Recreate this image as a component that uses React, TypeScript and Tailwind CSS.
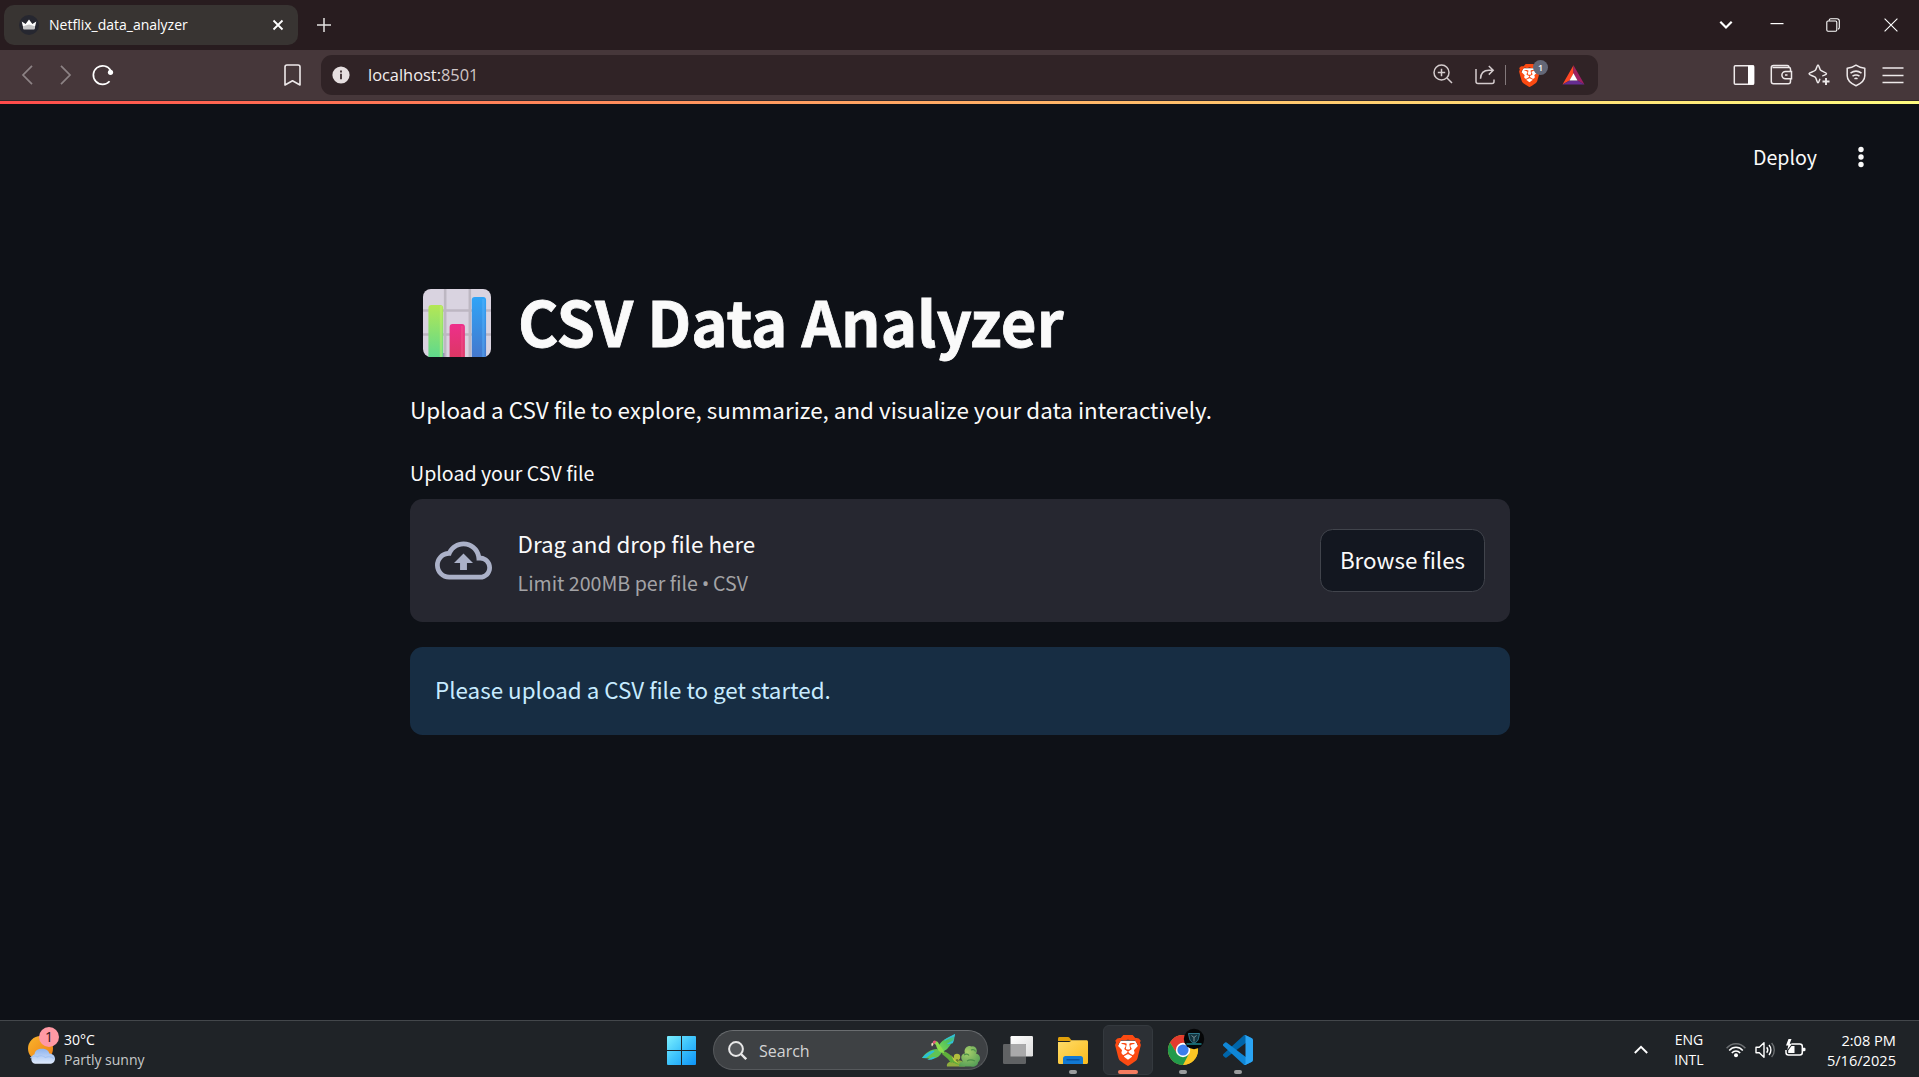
import type { ReactNode } from 'react';
import { SiBrave } from 'react-icons/si';

function BraveLogo({ className }: { className: string }) {
  return (
    <span className={`relative block ${className}`}>
      <svg viewBox="1.7 0 20.6 24" preserveAspectRatio="none" className="absolute inset-0 h-full w-full">
        <path d="M6 4.5h12l2.2 4.5-2 7.5L12 21.5 5.8 16.5 3.8 9z" fill="#fff" />
      </svg>
      <SiBrave viewBox="1.7 0 20.6 24" preserveAspectRatio="none" className="absolute inset-0 h-full w-full text-[#fb4a12]" />
    </span>
  );
}

function TabStrip() {
  return (
    <div className="flex h-[50px] items-center bg-[#281c1f] pl-1 text-white">
      <div className="flex h-10 w-[294px] items-center rounded-[10px] bg-[#383432] pl-[15px] pr-[14.5px]">
        <svg width="20" height="20" viewBox="0 0 20 20">
          <circle cx="10" cy="10" r="10" fill="#262730" />
          <path d="M2.7 6.4 6.6 9 10 4.6 13.4 9l3.9-2.6-1.9 7.9H4.6z" fill="#fff" />
          <path d="M4 11.2 10 9.6l6 1.6-.7 3.1H4.6z" fill="#c4c4c6" />
        </svg>
        <span className="ml-[10px] font-['Open_Sans',sans-serif] text-[14px] leading-5">Netflix_data_analyzer</span>
        <svg className="ml-auto" width="12" height="12" viewBox="0 0 12 12" stroke="#fff" strokeWidth="1.8">
          <path d="m1.5 1.5 9 9m0-9-9 9" />
        </svg>
      </div>
      <svg className="ml-[19px]" width="14" height="14" viewBox="0 0 14 14" stroke="#e4e2e2" strokeWidth="1.5">
        <path d="M7 0v14M0 7h14" />
      </svg>
      <div className="ml-auto flex items-center pr-[21px]">
        <svg width="14" height="10" viewBox="0 0 14 10" fill="none" stroke="#fff" strokeWidth="2.2">
          <path d="m1.3 1.8 5.7 5.7 5.7-5.7" />
        </svg>
        <svg className="ml-[37px] -mt-[3px]" width="14" height="2" viewBox="0 0 14 2">
          <path d="M.5 0h13v1.2H.5z" fill="#fff" />
        </svg>
        <svg className="ml-[42px] -mt-px" width="14" height="14" viewBox="0 0 14 14" fill="none" stroke="#fff" strokeWidth="1.1">
          <rect x=".8" y="3" width="10" height="10.2" rx="1.2" />
          <path d="M3.2 2.8v-.6C3.2 1.3 4 .7 4.8.7H11c1.300 0 2.300 1 2.300 2.300v6.600c0 .8-.5 1.400-1.300 1.500" />
        </svg>
        <svg className="ml-[44px] -mt-px" width="14" height="14" viewBox="0 0 14 14" stroke="#fff" strokeWidth="1.1">
          <path d="m.6.6 12.8 12.8m0-12.8L.6 13.4" />
        </svg>
      </div>
    </div>
  );
}

function AddressBar() {
  return (
    <div className="flex h-10 w-[1277px] items-center rounded-[11px] bg-[#302326] pl-[11px] pr-[13px]">
      <svg width="18" height="18" viewBox="0 0 18 18">
        <circle cx="9" cy="9" r="8.6" fill="#e6dfe0" />
        <path d="M8 4.5h2v2H8zM8 7.7h2v5.5H8z" fill="#4a3c3f" />
      </svg>
      <span className="ml-[18px] font-['Open_Sans',sans-serif] text-[16.4px] leading-6 text-[#f3edee]">
        localhost:<span className="text-[#cfc6c7]">8501</span>
      </span>
      <div className="ml-auto flex items-center">
        <svg className="-mt-0.5" width="20" height="20" viewBox="0 0 20 20" fill="none" stroke="#d4cccd" strokeWidth="1.5">
          <circle cx="8.5" cy="8.5" r="7.5" />
          <path d="M8.5 4.8v7.4M4.8 8.5h7.4M14 14l5 5" />
        </svg>
        <svg className="ml-[22px]" width="21" height="20" viewBox="0 0 21 20" fill="none" stroke="#d4cccd" strokeWidth="1.5">
          <path d="M1 4v12.5c0 1.2.8 2 2 2h14c1.2 0 2-.8 2-2V14.5" />
          <path d="M5.5 13.8c.2-5.5 3.500-8.500 8.500-8.500h4M13.800 1l4.400 4.300-4.400 4.300" />
        </svg>
        <span className="ml-[9px] h-5 w-[1.5px] bg-[#83797b]" />
        <span className="relative ml-[13px] block h-[23px] w-[21px]">
          <BraveLogo className="h-[23px] w-[21px]" />
          <span className="absolute -top-[4px] left-[14px] flex h-[15px] w-[15px] items-center justify-center rounded-full bg-[#636777] font-['Open_Sans',sans-serif] text-[9px] leading-none font-semibold text-white">
            1
          </span>
        </span>
        <svg className="ml-[22px]" width="23" height="20" viewBox="0 0 23 20">
          <path d="M11.5.3.5 19.6 7.6 15.4 11.5 8.5z" fill="#ff4724" />
          <path d="M11.5.3 22.5 19.6 15.4 15.4 11.5 8.5z" fill="#9e1f63" />
          <path d="M.5 19.6h22l-7.1-4.2H7.6z" fill="#662d91" />
          <path d="M11.5 8.2 15.5 15.5h-8z" fill="#fff" />
        </svg>
      </div>
    </div>
  );
}

function Toolbar() {
  return (
    <div className="flex h-[51px] items-center border-b border-[#33292c] bg-[#46373a] pl-[21px] pr-[15.5px]">
      <svg width="12" height="20" viewBox="0 0 12 20" fill="none" stroke="#8d8385" strokeWidth="1.7">
        <path d="M11 .8 2 10l9 9.2" />
      </svg>
      <svg className="ml-[27px]" width="12" height="20" viewBox="0 0 12 20" fill="none" stroke="#8d8385" strokeWidth="1.7">
        <path d="m1 .8 9 9.2-9 9.2" />
      </svg>
      <svg className="ml-5" width="22" height="22" viewBox="0 0 22 22" fill="none" stroke="#fff" strokeWidth="1.7">
        <path d="M17.6 17.3A9.3 9.3 0 1 1 18.6 6.3" />
        <circle cx="18.5" cy="8.3" r="2.6" fill="#fff" stroke="none" />
      </svg>
      <svg className="ml-[170px]" width="17" height="22" viewBox="0 0 17 22" fill="none" stroke="#eee9ea" strokeWidth="1.6" strokeLinejoin="round">
        <path d="M1 3c0-1.2.8-2 2-2h11c1.2 0 2 .8 2 2v18l-7.5-4.2L1 21z" />
      </svg>
      <div className="ml-5">
        <AddressBar />
      </div>
      <div className="ml-auto flex items-center gap-[15px] text-[#eee9ea]">
        <svg width="22" height="22" viewBox="0 0 22 22">
          <rect x="1.3" y="1.8" width="19.4" height="18.4" rx="1" fill="none" stroke="currentColor" strokeWidth="1.5" />
          <path d="M15 1.5h6v19h-6z" fill="#fff" />
        </svg>
        <svg width="23" height="22" viewBox="0 0 23 22" fill="none" stroke="currentColor" strokeWidth="1.5">
          <path d="M20.5 7.5V5c0-1-.5-1.5-1.5-1.5H2.5M19 3.500c0-1.200-.7-2-1.800-2H3.500c-1.300 0-2.200.8-2.200 2v14c0 1.500 1 2.300 2.300 2.300h14.600c1.300 0 2.300-.8 2.300-2.300V15" />
          <path d="M21.5 7.5h-6a3.6 3.6 0 0 0 0 7.2h6z" />
          <path d="M15 11h2.5" />
        </svg>
        <svg width="22" height="22" viewBox="0 0 22 22" fill="none" stroke="currentColor" strokeWidth="1.5" strokeLinejoin="round">
          <path d="M10 1c1 0 1.400 4 2.700 5.300C14 7.700 18.500 8.500 18.500 9.800c0 .9-2.800 1.500-4.200 2.200M10 1C9 1 8.600 5 7.300 6.300 6 7.700 1 8.600 1 9.800S6 12 7.300 13.300C8.600 14.700 9 18.800 10 18.800c.9 0 1.300-2.300 2-4" />
          <path d="M18 14v7M14.500 17.500h7" strokeWidth="1.9" />
        </svg>
        <svg width="22" height="23" viewBox="0 0 22 23" fill="none" stroke="currentColor" strokeWidth="1.5">
          <path d="M11 1.200c2.500 1.800 5 2.700 8.800 3v7.600c0 4.500-3.500 7.700-8.800 10-5.300-2.300-8.800-5.500-8.800-10V4.200c3.800-.3 6.300-1.200 8.800-3z" strokeLinejoin="round" />
          <path d="M5.500 9.200c3.300-2.500 7.700-2.500 11 0M7.500 12.200c2.200-1.500 4.800-1.500 7 0M9.500 14.800c1-.7 2-.7 3 0" />
        </svg>
        <svg width="22" height="18" viewBox="0 0 22 18" stroke="currentColor" strokeWidth="1.7">
          <path d="M.5 2h21M.5 9.500h21M.5 16.500h21" />
        </svg>
      </div>
    </div>
  );
}

function ChartEmoji() {
  return (
    <svg width="68" height="68" viewBox="0 0 69 68" preserveAspectRatio="none">
      <defs>
        <linearGradient id="bar-green" x1="0" x2="0" y1="0" y2="1">
          <stop offset="0" stopColor="#b4e755" />
          <stop offset="1" stopColor="#5fd98c" />
        </linearGradient>
        <linearGradient id="bar-pink" x1="0" x2="0" y1="0" y2="1">
          <stop offset="0" stopColor="#ee2f8b" />
          <stop offset="1" stopColor="#dc3764" />
        </linearGradient>
        <linearGradient id="bar-blue" x1="0" x2="0" y1="0" y2="1">
          <stop offset="0" stopColor="#2fa4f7" />
          <stop offset="1" stopColor="#4478cd" />
        </linearGradient>
      </defs>
      <rect width="69" height="68" rx="8" fill="#d9d3e0" />
      <path d="M22.5 0v68M47.5 0v68M0 21.5h69M0 45.5h69" stroke="#bdb7c2" strokeWidth="2.6" />
      <path d="M20.5 64v4" stroke="#9d86b8" strokeWidth="2.5" />
      <path d="M5.5 68V19a3 3 0 0 1 3-3h9a3 3 0 0 1 3 3v49z" fill="url(#bar-green)" />
      <path d="M17 17v51h2.500V17z" fill="#c6f570" opacity=".45" />
      <path d="M27 68V38a3 3 0 0 1 3-3h9.500a3 3 0 0 1 3 3v30z" fill="url(#bar-pink)" />
      <path d="M38.5 37v31H41V37z" fill="#f4588f" opacity=".45" />
      <path d="M49.5 68V11a3 3 0 0 1 3-3h8.500a3 3 0 0 1 3 3v57z" fill="url(#bar-blue)" />
      <path d="M60 10v58h2.500V10z" fill="#5ab4fa" opacity=".45" />
    </svg>
  );
}

function AppPage() {
  return (
    <main className="flex flex-1 flex-col bg-[#0e1117] font-['Noto_Sans_CJK_SC',sans-serif] text-[22.4px] text-[#fafafa]">
      <div className="h-[3px] bg-linear-to-r from-[#ff4b4b] to-[#fffd80]" />
      <header className="flex h-[106px] items-center justify-end pr-[53.5px]">
        <span className="text-[19.6px] leading-[30px]">Deploy</span>
        <svg className="ml-[38.5px]" width="10" height="22" viewBox="0 0 10 22" fill="currentColor">
          <circle cx="5" cy="3.5" r="2.7" />
          <circle cx="5" cy="11" r="2.7" />
          <circle cx="5" cy="18.5" r="2.7" />
        </svg>
      </header>
      <div className="mt-[71px] ml-[410px] w-[1100px]">
        <h1 className="flex h-[78px] items-center pl-[12.5px] text-[61.7px] leading-[78px] font-bold">
          <span className="mt-1.5">
            <ChartEmoji />
          </span>
          <span className="ml-[27.5px] whitespace-nowrap [-webkit-text-stroke:0.8px_#fafafa]">CSV Data Analyzer</span>
        </h1>
        <p className="mt-8 leading-9">Upload a CSV file to explore, summarize, and visualize your data interactively.</p>
        <p className="mt-[31px] text-[19.6px] leading-[30px]">Upload your CSV file</p>
        <section className="mt-[11px] flex h-[123px] items-center rounded-[12.5px] bg-[#262730] px-[25px]">
          <svg width="57" height="57" viewBox="0 0 24 24" fill="#abb1c8">
            <path d="M19.35 10.04A7.49 7.49 0 0 0 12 4C9.11 4 6.6 5.64 5.35 8.04A5.994 5.994 0 0 0 0 14c0 3.31 2.69 6 6 6h13c2.76 0 5-2.24 5-5 0-2.64-2.05-4.78-4.65-4.96zM19 18H6c-2.21 0-4-1.79-4-4s1.79-4 4-4h.71C7.37 7.69 9.48 6 12 6c3.04 0 5.5 2.46 5.5 5.5v.5H19c1.66 0 3 1.34 3 3s-1.34 3-3 3zM8 13h2.55v3h2.9v-3H16l-4-4z" />
          </svg>
          <div className="ml-[25.5px]">
            <p className="leading-[38px]">Drag and drop file here</p>
            <p className="mt-1.5 text-[19.6px] leading-[30px] text-[#a3a3a6]">
              Limit 200MB per file <span className="-mx-[0.5px] font-['Open_Sans',sans-serif] text-[20px] leading-none">•</span> CSV
            </p>
          </div>
          <button className="ml-auto h-[63px] w-[165px] rounded-[12.5px] border border-[#41444c] bg-[#131720] pb-px">
            Browse files
          </button>
        </section>
        <section className="mt-[25px] flex h-[88px] items-center rounded-[12.5px] bg-[#172d43] px-[25px] pb-0.5 text-[#c7ebff]">
          Please upload a CSV file to get started.
        </section>
      </div>
    </main>
  );
}

function TaskItem({ children, active = false, running = true }: { children: ReactNode; active?: boolean; running?: boolean }) {
  return (
    <div
      className={
        active
          ? 'relative flex h-[50px] w-[50px] items-center justify-center rounded-md border border-[#34393e] bg-[#2c3035]'
          : 'relative flex h-[50px] w-[50px] items-center justify-center'
      }
    >
      {children}
      {running && (
        <span
          className={
            active
              ? 'absolute bottom-0 left-[14px] h-1 w-5 rounded-full bg-[#f57c60]'
              : 'absolute bottom-px left-[21px] h-1 w-2 rounded-full bg-[#9b9c9e]'
          }
        />
      )}
    </div>
  );
}

function Parrot() {
  return (
    <svg width="60" height="34" viewBox="0 0 60 34">
      <defs>
        <radialGradient id="bush" cx=".4" cy=".3" r=".8">
          <stop offset="0" stopColor="#a9d06a" />
          <stop offset="1" stopColor="#4f9a55" />
        </radialGradient>
        <linearGradient id="wing" x1="0" x2="1" y1="1" y2="0">
          <stop offset="0" stopColor="#7ed957" />
          <stop offset=".6" stopColor="#4fc05a" />
          <stop offset="1" stopColor="#35b8c4" />
        </linearGradient>
      </defs>
      <path d="M26 33.5c-1-4 4-6 7-4 2-3 8-3 9 0l2 4z" fill="#8fae3e" />
      <circle cx="36" cy="24" r="3.2" fill="#b3bd3c" />
      <path d="M35.3 26h1.500v5h-1.500z" fill="#6b7a2e" />
      <path d="M38 33.500c0-4 2-5 4-5-3-3-2-8 2-8-2-5 3-9 7-7 4-1 6 4 4 7 5 1 5 7 2 9 0 3-4 5-7 4z" fill="url(#bush)" />
      <path d="M43 22c2-1.500 4-1 5 .5M50 17c2-1 4 0 4.500 1.500M46 28c3-2 6-1 8 0" fill="none" stroke="#4b8f48" strokeWidth="1.1" />
      <path d="M22 18c4 1 8 4 10 7l7 7-4-1-3-2-2 1-3-4-6-5z" fill="#5fae3a" />
      <path d="m30 22 8 9-5-3z" fill="#c4cf44" />
      <path d="M34 1C27 5 19 7 17 15l4 4c5-2 7-5 9-8l3-4z" fill="url(#wing)" />
      <path d="M34 1c-4 2-8 4-11 6l1 .8c3-2 6-3.500 9.500-4.300zM33 7l-7 3.500.8.800 5-1z" fill="#31bfd6" />
      <path d="M1 25c3-5 9-9 15-9l5 3c-2 4-5 6-9 7l-5 .5 1-1z" fill="#61c454" />
      <path d="M1 25c3-3.500 7-7 12-7.500l.5 1L5 25zM6 27l6-3 3 0-4 2.500z" fill="#2bc0d8" />
      <path d="M12 9c2-2 5-1 6 2 2 3 5 6 5 9-4 0-7-3-8-8z" fill="#8cdc4c" />
      <path d="M12 8.500c1-1.200 2.500-1.200 3.300 0l-1.300 2-2 .3z" fill="#e9577a" />
      <path d="M11.500 9.500c-1.500.5-1.500 2.500-.5 4l1.500-2z" fill="#f3dfc0" />
    </svg>
  );
}

function Taskbar() {
  return (
    <footer className="flex h-[57px] items-center border-t border-[#43474b] bg-[#1f2327] font-['Open_Sans',sans-serif] text-[14px] leading-5 text-white">
      <div className="flex w-[667px] items-center pl-7">
        <svg className="-mt-1.5" width="32" height="38" viewBox="0 0 32 38">
          <defs>
            <linearGradient id="sun" x1="0" x2="1" y1="0" y2="1">
              <stop offset="0" stopColor="#f8b52c" />
              <stop offset="1" stopColor="#ef7c15" />
            </linearGradient>
            <linearGradient id="cloud" x1="0" x2="0" y1="0" y2="1">
              <stop offset="0" stopColor="#8fb4ee" />
              <stop offset="1" stopColor="#dfeafc" />
            </linearGradient>
          </defs>
          <circle cx="12.5" cy="21.5" r="12.5" fill="url(#sun)" />
          <path d="M7 36.800a5 5 0 0 1-.5-9.500C7 23.500 10 21.800 14 21.800s6.800 2 7.300 4.700c3.200 0 5.700 2.300 5.700 5.200s-2.300 5.100-5.200 5.100z" fill="url(#cloud)" />
          <path d="M2.500 31c2-2.300 5-2.600 7-1 2.500-2 6-1.600 8 .6 2.500-1.500 6-1 8.500 1" fill="none" stroke="#a5c4f3" strokeWidth="1.2" />
          <circle cx="21" cy="10" r="10" fill="#ff99a4" />
          <text x="21" y="15" textAnchor="middle" fontSize="14" fill="#2b1216">1</text>
        </svg>
        <div className="mt-0.5 ml-1">
          <p>30°C</p>
          <p className="text-[#c6c8c9]">Partly sunny</p>
        </div>
      </div>
      <svg className="mt-[3px]" width="29" height="29" viewBox="0 0 29 29">
        <defs>
          <linearGradient id="windows" x1="0" x2="1" y1="0" y2="1">
            <stop offset="0" stopColor="#7cf0ff" />
            <stop offset=".5" stopColor="#3cc2fb" />
            <stop offset="1" stopColor="#0d93f8" />
          </linearGradient>
        </defs>
        <path d="M1 0h13v14H0V1a1 1 0 0 1 1-1zM15 0h13a1 1 0 0 1 1 1v13H15zM0 15h14v14H1a1 1 0 0 1-1-1zM15 15h14v13a1 1 0 0 1-1 1H15z" fill="url(#windows)" />
      </svg>
      <div className="mt-[2px] ml-[17px] flex h-10 w-[275px] items-center rounded-full border border-[#56595c] border-t-[#6a6d70] bg-[#3e4144] pl-[14px] pr-[6px]">
        <svg width="19" height="19" viewBox="0 0 19 19" fill="none" stroke="#e8e8e8" strokeWidth="2">
          <circle cx="8" cy="8" r="6.9" fill="#55585b" />
          <path d="m13 13 5.2 5.2" strokeWidth="2.4" />
        </svg>
        <span className="ml-[12px] pt-px text-[16px] text-[#d3d4d5]">Search</span>
        <span className="ml-auto">
          <Parrot />
        </span>
      </div>
      <div className="mt-[2px] ml-[5px] flex gap-[5px]">
        <TaskItem running={false}>
          <svg width="30" height="28" viewBox="0 0 30 28">
            <defs>
              <linearGradient id="pane" x1="0" x2="1" y1="0" y2="1">
                <stop offset="0" stopColor="#fff" />
                <stop offset="1" stopColor="#dcdcdc" />
              </linearGradient>
            </defs>
            <rect x="7.5" width="22.5" height="20.5" rx="1.2" fill="url(#pane)" />
            <rect y="8" width="23" height="20" rx="1.2" fill="#606264" />
            <path d="M7.5 8H22a1 1 0 0 1 1 1v11.500H7.500z" fill="#a9a9aa" />
          </svg>
        </TaskItem>
        <TaskItem>
          <svg width="30" height="27" viewBox="0 0 30 27">
            <defs>
              <linearGradient id="folder" x1="0" x2="1" y1="0" y2="1">
                <stop offset="0" stopColor="#ffdc69" />
                <stop offset="1" stopColor="#fbbb1c" />
              </linearGradient>
            </defs>
            <path d="M0 1.5C0 .7.6 0 1.500 0h8c1 0 1.600.3 2.200 1L14 4H0z" fill="#e0a00b" />
            <path d="M0 5h10.500c1 0 1.600-.4 2.300-1l.7-.8H28.500c.8 0 1.500.6 1.500 1.500v20.800c0 .8-.7 1.500-1.500 1.500h-27C.7 27 0 26.300 0 25.500z" fill="url(#folder)" />
            <path d="M5 27v-5.500C5 20 6 19 7.500 19h15c1.500 0 2.500 1 2.500 2.500V27z" fill="#1279d3" />
            <path d="M8.500 22.800h13" stroke="#0a4f9a" strokeWidth="1.3" />
          </svg>
        </TaskItem>
        <TaskItem active>
          <BraveLogo className="h-[31px] w-[26px]" />
        </TaskItem>
        <TaskItem>
          <svg className="overflow-visible" width="30" height="30" viewBox="0 0 30 30">
            <circle cx="15" cy="15" r="15" fill="#f9c31f" />
            <path d="M15 8h13.200A15 15 0 0 0 2 7.500l6.900 11z" fill="#e33b2e" />
            <path d="M15 30A15 15 0 0 0 28.200 8H15z" fill="#fbc524" />
            <path d="M15 30l6.100-11.500L9 18.500 2 7.500A15 15 0 0 0 15 30z" fill="#229a4b" />
            <circle cx="15" cy="15" r="7.2" fill="#fff" />
            <circle cx="15" cy="15" r="5.6" fill="#3b7ded" />
            <circle cx="26" cy="4" r="10.2" fill="#050607" />
            <path d="M20.500-1.500h11l-1 5c-.5 2.500-2.500 4-4.500 4.500-2-.5-4-2-4.500-4.500z" fill="#12343f" stroke="#3a8ea4" strokeWidth=".8" />
            <path d="m23.500.5 2.500 2 2.500-2M26 2.500v4" fill="none" stroke="#7a8f96" />
            <path d="M18.500 9h15" stroke="#1d8d96" strokeWidth="1.4" />
          </svg>
        </TaskItem>
        <TaskItem>
          <svg width="30" height="30" viewBox="0 0 100 100">
            <path d="M96.461 10.796 75.857.876a6.23 6.23 0 0 0-7.107 1.207L1.299 63.583a4.167 4.167 0 0 0 .004 6.162l5.510 5.009a4.167 4.167 0 0 0 5.321.236L93.361 13.370C96.086 11.303 100 13.246 100 16.667v-.24a6.250 6.250 0 0 0-3.539-5.631z" fill="#0065a9" />
            <path d="m96.461 89.204-20.604 9.920a6.229 6.229 0 0 1-7.107-1.207L1.299 36.417a4.167 4.167 0 0 1 .004-6.162l5.510-5.009a4.167 4.167 0 0 1 5.321-.236L93.361 86.630c2.725 2.067 6.639.124 6.639-3.297v.24a6.250 6.250 0 0 1-3.539 5.631z" fill="#0f86d6" />
            <path d="M75.858 99.126a6.232 6.232 0 0 1-7.108-1.210C71.056 100.223 75 98.590 75 95.328V4.672c0-3.262-3.944-4.895-6.250-2.589a6.232 6.232 0 0 1 7.108-1.210l20.601 9.908A6.250 6.250 0 0 1 100 16.413v67.174a6.250 6.250 0 0 1-3.541 5.633z" fill="#2aa4f4" />
          </svg>
        </TaskItem>
      </div>
      <div className="ml-auto flex items-center pr-[23px]">
        <svg width="14" height="9" viewBox="0 0 14 9" fill="none" stroke="#fff" strokeWidth="1.9">
          <path d="m.8 8 6.200-6.200L13.200 8" />
        </svg>
        <div className="mt-[2px] ml-[25px] w-[32px] text-center">
          <p>ENG</p>
          <p>INTL</p>
        </div>
        <svg className="mt-0.5 ml-[21px]" width="20" height="16" viewBox="0 0 20 16" fill="none" stroke="#fff" strokeWidth="1.5">
          <path d="M.6 6.200c5.200-6 13.600-6 18.800 0" stroke="#6c6f72" />
          <path d="M3.200 8.500c3.800-4.300 9.800-4.300 13.600 0M5.800 11c2.400-2.700 6-2.700 8.400 0" />
          <circle cx="10" cy="13.2" r="2" fill="#fff" stroke="none" />
        </svg>
        <svg className="mt-0.5 ml-[9px]" width="21" height="18" viewBox="0 0 21 18" fill="none" stroke="#fff" strokeWidth="1.4">
          <path d="M1 6.300h3.300L9 1.800v14.400l-4.700-4.500H1z" strokeLinejoin="round" />
          <path d="M11.700 6.300c1.200 1.500 1.200 3.900 0 5.400M14 4c2.500 2.700 2.500 7.300 0 10" />
          <path d="M16.600 2c3.600 3.800 3.600 10.200 0 14" stroke="#6c6f72" />
        </svg>
        <svg className="-mt-0.5 ml-[9px]" width="21" height="18" viewBox="0 0 21 18" fill="none" stroke="#fff" strokeWidth="1.5">
          <path d="M6.500 5h8.300C16.300 5 17.300 6 17.300 7.500v6c0 1.500-1 2.500-2.500 2.500H3.500C2 16 1 15 1 13.500V11" />
          <path d="M18 8.700h1.300c.7 0 1.200.5 1.200 1.200v1.200c0 .7-.5 1.200-1.200 1.200H18z" fill="#fff" stroke="none" />
          <path d="M6.500 7h3v7H3.200v-2.500z" fill="#fff" stroke="none" />
          <path d="M3.500 0 1 6.500h2.300L2.300 11 7 4.700H4.700L6.500 0z" fill="#fff" stroke="none" />
        </svg>
        <div className="mt-0.5 ml-[21px] text-right text-[14.6px]">
          <p>2:08 PM</p>
          <p>5/16/2025</p>
        </div>
      </div>
    </footer>
  );
}

export default function App() {
  return (
    <div className="flex h-[1077px] w-[1919px] flex-col overflow-hidden bg-[#0e1117]">
      <TabStrip />
      <Toolbar />
      <AppPage />
      <Taskbar />
    </div>
  );
}
